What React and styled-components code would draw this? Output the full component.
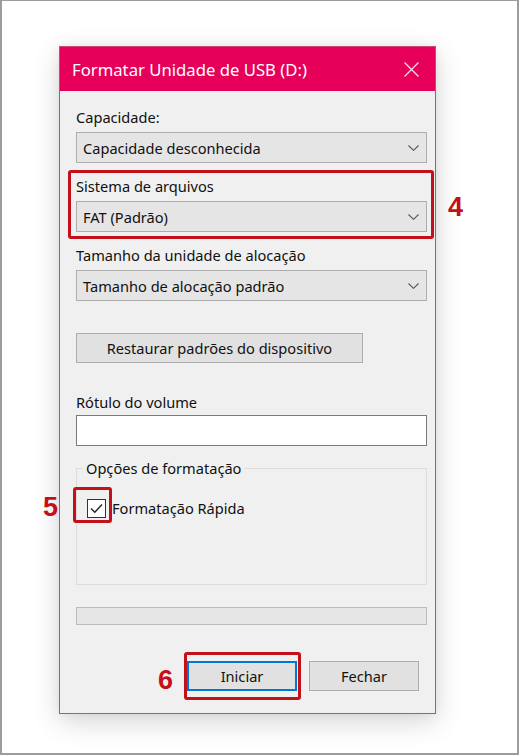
import styled, { createGlobalStyle } from "styled-components";

const GlobalStyle = createGlobalStyle`
  html, body {
    margin: 0;
    padding: 0;
    background: #fff;
  }
  body {
    font-family: "Noto Sans", "Open Sans", sans-serif;
  }
`;

const Frame = styled.div`
  width: 519px;
  height: 755px;
  box-sizing: border-box;
  border: 2px solid #9c9c9c;
  border-top-width: 1px;
  padding: 45px 0 0 57px;
  background: #fff;
`;

const Dialog = styled.div`
  width: 377px;
  height: 668px;
  box-sizing: border-box;
  border: 1px solid #c9497a;
  background: #f0f0f0;
  box-shadow: 0 8px 26px rgba(0, 0, 0, 0.16), 0 0 10px rgba(0, 0, 0, 0.06);
  display: flex;
  flex-direction: column;
`;

const TitleBar = styled.div`
  height: 44px;
  flex-shrink: 0;
  display: flex;
  align-items: center;
  justify-content: space-between;
  padding: 0 16px 0 12px;
  background: #e6005a;
  color: #fff;
  font-size: 16.7px;
`;

const Body = styled.div`
  display: flex;
  flex-direction: column;
  padding: 16px 8px 0 16px;
  font-size: 14.6px;
`;

const Field = styled.div`
  position: relative;
  display: flex;
  flex-direction: column;
  margin-top: ${(p) => p.$top || 0}px;
`;

const Label = styled.div`
  line-height: 20px;
  color: #111;
  margin-bottom: ${(p) => (p.$gap ?? 5)}px;
`;

const Select = styled.div`
  height: 31px;
  box-sizing: border-box;
  border: 1px solid #adadad;
  background: #e5e5e5;
  display: flex;
  align-items: center;
  justify-content: space-between;
  padding: 0 7px 0 6px;
  color: #111;
`;

const TextInput = styled.div`
  height: 31px;
  box-sizing: border-box;
  border: 1px solid #7a7a7a;
  background: #fff;
`;

const Button = styled.div`
  position: relative;
  height: 30px;
  width: ${(p) => p.$width}px;
  box-sizing: border-box;
  border: ${(p) => (p.$primary ? "2px solid #0078d7" : "1px solid #adadad")};
  background: #e1e1e1;
  display: flex;
  align-items: center;
  justify-content: center;
  color: #111;
  margin-top: ${(p) => p.$top || 0}px;
`;

const Group = styled.fieldset`
  margin: 12px 0 0;
  padding: 0 0 66px 10px;
  border: 1px solid #dcdcdc;
  min-width: 0;
`;

const Legend = styled.legend`
  line-height: 20px;
  color: #111;
  padding: 0 3px;
  margin-left: -4px;
`;

const CheckRow = styled.div`
  display: flex;
  align-items: center;
  gap: 6px;
  margin-top: 20px;
  color: #111;
`;

const CheckBox = styled.div`
  position: relative;
  width: 19px;
  height: 19px;
  box-sizing: border-box;
  border: 1px solid #333;
  background: #fff;
  display: flex;
  align-items: center;
  justify-content: center;
`;

const Progress = styled.div`
  height: 18px;
  box-sizing: border-box;
  margin-top: 22px;
  border: 1px solid #bcbcbc;
  background: #e6e6e6;
`;

const ButtonRow = styled.div`
  display: flex;
  justify-content: flex-end;
  gap: 12px;
  margin-top: 36px;
  padding-right: 8px;
`;

const Highlight = styled.div`
  position: absolute;
  top: ${(p) => p.$t}px;
  right: ${(p) => p.$r}px;
  bottom: ${(p) => p.$b}px;
  left: ${(p) => p.$l}px;
  border: 3px solid #c41018;
  border-radius: 3px;
  pointer-events: none;
`;

const Step = styled.div`
  position: absolute;
  top: ${(p) => p.$t}px;
  left: ${(p) => p.$l}px;
  font-family: "Liberation Sans", Arial, sans-serif;
  font-weight: bold;
  font-size: 27px;
  line-height: 26px;
  color: #c41018;
`;

const Chevron = () => (
  <svg width="11" height="6" viewBox="0 0 11 6">
    <polyline points="0.5,0.5 5.5,5.3 10.5,0.5" fill="none" stroke="#555" strokeWidth="1.1" />
  </svg>
);

const CloseIcon = () => (
  <svg width="15" height="15" viewBox="0 0 15 15">
    <path d="M0.5 0.5 L14.5 14.5 M14.5 0.5 L0.5 14.5" stroke="#fbdde8" strokeWidth="1.2" />
  </svg>
);

const Check = () => (
  <svg width="15" height="15" viewBox="0 0 15 15">
    <polyline points="2,7.5 5.8,11.3 13,3.5" fill="none" stroke="#222" strokeWidth="1.4" />
  </svg>
);

const App = () => {
  return (
    <>
      <GlobalStyle />
      <Frame>
        <Dialog>
          <TitleBar>
            <span>Formatar Unidade de USB (D:)</span>
            <CloseIcon />
          </TitleBar>
          <Body>
            <Field>
              <Label>Capacidade:</Label>
              <Select>
                Capacidade desconhecida
                <Chevron />
              </Select>
            </Field>

            <Field $top={13}>
              <Label>Sistema de arquivos</Label>
              <Select>
                FAT (Padrão)
                <Chevron />
              </Select>
              <Highlight $t={-6} $r={-7} $b={-7} $l={-8} />
              <Step $t={18} $l={372}>4</Step>
            </Field>

            <Field $top={13}>
              <Label>Tamanho da unidade de alocação</Label>
              <Select>
                Tamanho de alocação padrão
                <Chevron />
              </Select>
            </Field>

            <Button $width={287} $top={32}>Restaurar padrões do dispositivo</Button>

            <Field $top={29}>
              <Label $gap={3}>Rótulo do volume</Label>
              <TextInput />
            </Field>

            <Group>
              <Legend>Opções de formatação</Legend>
              <CheckRow>
                <CheckBox>
                  <Check />
                  <Highlight $t={-13} $r={-7} $b={-6} $l={-15} />
                  <Step $t={-6} $l={-45}>5</Step>
                </CheckBox>
                Formatação Rápida
              </CheckRow>
            </Group>

            <Progress />

            <ButtonRow>
              <Button $width={110} $primary>
                Iniciar
                <Highlight $t={-11} $r={-6} $b={-11} $l={-5} />
                <Step $t={4} $l={-31}>6</Step>
              </Button>
              <Button $width={110}>Fechar</Button>
            </ButtonRow>
          </Body>
        </Dialog>
      </Frame>
    </>
  );
};

export default App;
